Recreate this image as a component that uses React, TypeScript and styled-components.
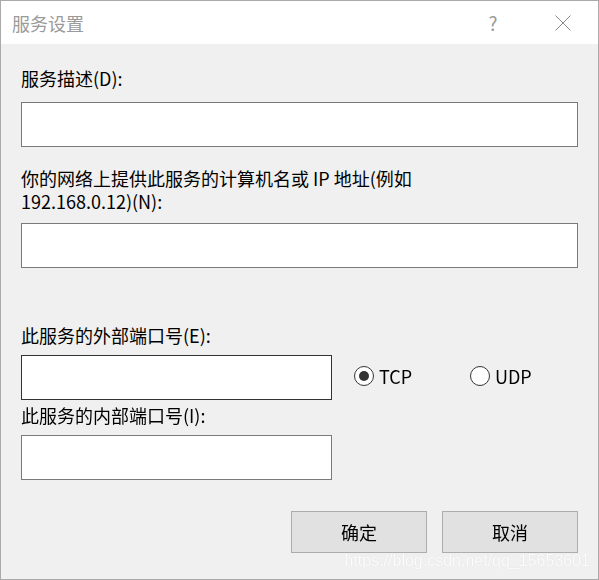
import React, { useState } from 'react';
import styled, { createGlobalStyle } from 'styled-components';

const GlobalStyle = createGlobalStyle`
  html, body {
    margin: 0;
    padding: 0;
    background: #f0f0f0;
  }

  body {
    font-family: 'Noto Sans CJK SC', 'Noto Sans', sans-serif;
    color: #000;
  }
`;

const Window = styled.div`
  position: relative;
  box-sizing: border-box;
  width: 599px;
  height: 580px;
  border: 1px solid #aaaaaa;
  background: #f0f0f0;
  overflow: hidden;
`;

const TitleBar = styled.div`
  display: flex;
  align-items: center;
  height: 43px;
  padding-left: 11px;
  background: #fff;
`;

const TitleText = styled.span`
  flex: 1;
  font-size: 18px;
  line-height: 20px;
  color: #9a9a9a;
`;

const TitleButton = styled.span`
  display: flex;
  align-items: center;
  justify-content: center;
  width: 70px;
  height: 43px;
  color: #9a9a9a;
  font-size: 19px;
`;

const Content = styled.div`
  padding: 0 20px;
`;

const Label = styled.div`
  font-size: 18px;
  line-height: 23px;
  margin-top: ${({ $top }: { $top: number }) => $top}px;
  margin-bottom: ${({ $bottom }: { $bottom?: number }) => $bottom ?? 12}px;
`;

const TextBox = styled.input`
  display: block;
  flex-shrink: 0;
  box-sizing: border-box;
  width: ${({ $width }: { $width?: number }) => ($width ? `${$width}px` : '100%')};
  height: 45px;
  margin: 0;
  padding: 0 6px;
  border: 1px solid #7a7a7a;
  background: #fff;
  font-family: inherit;
  font-size: 18px;
  outline: none;

  &:focus {
    border-color: #333;
  }
`;

const PortRow = styled.div`
  display: flex;
  align-items: center;
`;

const RadioGroup = styled.div`
  display: flex;
  align-items: center;
  margin: -3px 0 0 22px;
`;

const RadioOption = styled.label`
  display: flex;
  align-items: center;
  gap: 5px;
  width: 116px;
  font-size: 18px;
  line-height: 23px;
  cursor: default;
`;

const RadioCircle = styled.span<{ $checked: boolean }>`
  display: flex;
  flex-shrink: 0;
  align-items: center;
  justify-content: center;
  box-sizing: border-box;
  width: 20px;
  height: 20px;
  border: 1px solid #333;
  border-radius: 50%;
  background: #fff;

  &::after {
    content: '';
    width: 10px;
    height: 10px;
    border-radius: 50%;
    background: ${({ $checked }) => ($checked ? '#333' : 'transparent')};
  }
`;

const ButtonRow = styled.div`
  display: flex;
  justify-content: flex-end;
  gap: 15px;
  margin-top: 31px;
`;

const DialogButton = styled.button`
  box-sizing: border-box;
  width: 136px;
  height: 42px;
  border: 1px solid #adadad;
  background: #e1e1e1;
  font-family: inherit;
  font-size: 18px;
  color: #000;
  padding: 0;
`;

const Watermark = styled.div`
  position: absolute;
  right: 8px;
  bottom: 9px;
  font-family: 'Liberation Sans', Arial, sans-serif;
  font-size: 16px;
  color: rgba(255, 255, 255, 0.9);
  text-shadow: 0 0 1px rgba(0, 0, 0, 0.12);
  pointer-events: none;
`;

function CloseIcon() {
  return (
    <svg width="16" height="16" viewBox="0 0 16 16">
      <path d="M0.5 0.5 L15.5 15.5 M15.5 0.5 L0.5 15.5" stroke="#8a8a8a" strokeWidth="1" fill="none" />
    </svg>
  );
}

type Protocol = 'TCP' | 'UDP';

function App() {
  const [protocol, setProtocol] = useState<Protocol>('TCP');

  return (
    <>
      <GlobalStyle />
      <Window>
        <TitleBar>
          <TitleText>服务设置</TitleText>
          <TitleButton>?</TitleButton>
          <TitleButton>
            <CloseIcon />
          </TitleButton>
        </TitleBar>
        <Content>
          <Label $top={23}>服务描述(D):</Label>
          <TextBox />
          <Label $top={20} $bottom={10}>
            你的网络上提供此服务的计算机名或 IP 地址(例如
            <br />
            192.168.0.12)(N):
          </Label>
          <TextBox />
          <Label $top={56} $bottom={8}>此服务的外部端口号(E):</Label>
          <PortRow>
            <TextBox $width={311} autoFocus />
            <RadioGroup>
              {(['TCP', 'UDP'] as Protocol[]).map(p => (
                <RadioOption key={p} onClick={() => setProtocol(p)}>
                  <RadioCircle $checked={protocol === p} />
                  {p}
                </RadioOption>
              ))}
            </RadioGroup>
          </PortRow>
          <Label $top={4} $bottom={8}>此服务的内部端口号(I):</Label>
          <TextBox $width={311} />
          <ButtonRow>
            <DialogButton>确定</DialogButton>
            <DialogButton>取消</DialogButton>
          </ButtonRow>
        </Content>
        <Watermark>https://blog.csdn.net/qq_15653601</Watermark>
      </Window>
    </>
  );
}

export default App;
